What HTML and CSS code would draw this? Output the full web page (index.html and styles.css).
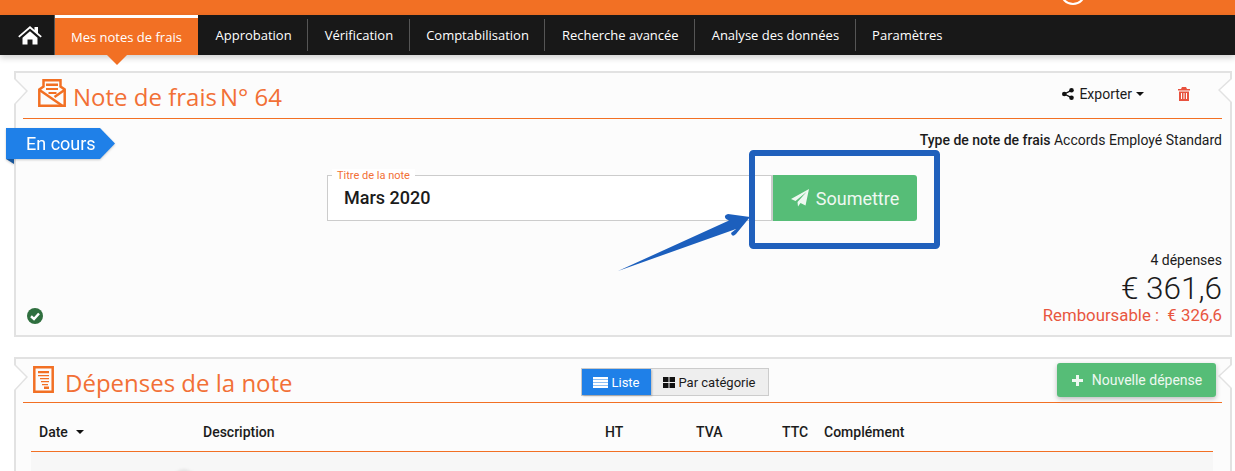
FILE: index.html
```html
<!DOCTYPE html>
<html lang="fr">
<head>
<meta charset="utf-8">
<title>Note de frais N° 64</title>
<link rel="stylesheet" href="styles.css">
</head>
<body>
<div class="topbar"><span class="avatar"></span></div>
<nav class="nav">
  <a class="nav-home">
    <svg width="24" height="20" viewBox="0 0 24 20"><path class="home-out" d="M12 1 L16.500 4.900 V2 H20 V8 L23.800 11.300 L22.600 12.600 L12 3.600 L1.400 12.600 L0.200 11.300 Z"/><path class="home-out" d="M4.500 12.800 L12 6.300 L19.500 12.800 V19.500 H14.500 V14.500 H9.500 V19.500 H4.500Z"/></svg>
  </a>
  <a class="nav-item active">Mes notes de frais</a>
  <a class="nav-item sep">Approbation</a>
  <a class="nav-item sep">Vérification</a>
  <a class="nav-item sep">Comptabilisation</a>
  <a class="nav-item sep">Recherche avancée</a>
  <a class="nav-item sep">Analyse des données</a>
  <a class="nav-item">Paramètres</a>
</nav>
<main class="main">
  <section class="card card-note">
    <svg class="notch notch-l" width="14" height="28" viewBox="0 0 14 28"><path d="M0 0 L13 13 L0 27" /></svg>
    <svg class="notch notch-r" width="14" height="28" viewBox="0 0 14 28"><path d="M14 0 L1 12 L14 25" /></svg>
    <header class="card-head">
      <div class="title">
        <svg class="title-icon" width="28" height="28" viewBox="0 0 28 28"><path class="ico-stroke" d="M1.300 10.500 L5.500 7.500 V1.300 H22.500 V7.500 L26.700 10.500 V26.700 H1.300Z"/><path class="ico-stroke" d="M1.500 11 L24 26.500 M26.500 11 L16.500 18"/><path class="ico-fill" d="M8 4.500h12v2.500H8zM8 9h12v2H8zM10.500 13h8v2h-8z"/></svg>
        <h1 class="title-text">Note de frais<span class="title-num">N° 64</span></h1>
      </div>
      <div class="actions">
        <span class="export"><svg width="12" height="12" viewBox="0 0 12 12"><circle cx="9.500" cy="2.300" r="2.300"/><circle cx="2.300" cy="6" r="2.300"/><circle cx="9.500" cy="9.700" r="2.300"/><path class="share-line" d="M9.500 2.300 L2.300 6 L9.500 9.700"/></svg>Exporter<i class="caret"></i></span>
        <svg class="trash" width="12" height="14" viewBox="0 0 12 14"><path d="M4 0h4l1 2h3v1.500H0V2h3Z"/><path fill-rule="evenodd" d="M1 4.500h10V14H1Z M3 6v6h1V6Z M5.500 6v6h1V6Z M8 6v6h1V6Z"/></svg>
      </div>
    </header>
    <div class="note-body">
      <div class="badge"><span class="badge-text">En cours</span><i class="badge-fold"></i></div>
      <p class="type"><b>Type de note de frais</b> Accords Employé Standard</p>
      <div class="submit-row">
        <div class="field">
          <span class="field-label">Titre de la note</span>
          <span class="field-value">Mars 2020</span>
        </div>
        <button class="btn-submit">
          <svg width="18" height="18" viewBox="0 0 18 18"><path d="M18 0 L14.500 16.500 L9.500 14 L7 17.500 L6.500 13 L15.500 3 L4.500 12 L0 10Z"/></svg>Soumettre
        </button>
      </div>
      <div class="note-foot">
        <svg class="ok" width="16" height="16" viewBox="0 0 16 16"><circle cx="8" cy="8" r="8"/><path d="M4 8.300 L7 11 L12 5.500"/></svg>
        <div class="totals">
          <div class="count">4 dépenses</div>
          <div class="amount">€ 361,6</div>
          <div class="refund">Remboursable :&nbsp; € 326,6</div>
        </div>
      </div>
    </div>
  </section>

  <section class="card card-exp">
    <svg class="notch notch-l" width="14" height="28" viewBox="0 0 14 28"><path d="M0 0 L13 13 L0 27" /></svg>
    <svg class="notch notch-r" width="14" height="28" viewBox="0 0 14 28"><path d="M14 0 L1 12 L14 25" /></svg>
    <header class="exp-head">
      <div class="title">
        <svg class="exp-icon" width="21" height="27" viewBox="0 0 21 27"><path class="ico-stroke" d="M1.300 1.300h18.400v24.400H1.300Z"/><path class="ico-fill" d="M5 5h11v2.200H5zM5 9h11v1.300H5zM7 12h9v1.300H7zM8 15h8v1.300H8zM9 18h6v1.300H9zM11 20.500h5v2.500h-5z"/></svg>
        <h2 class="title-text">Dépenses de la note</h2>
      </div>
      <div class="toggle">
        <span class="toggle-on"><svg width="15" height="11" viewBox="0 0 15 11"><path d="M0 0h15v2.500H0zM0 3h15v2.300H0zM0 5.800h15v2.300H0zM0 8.600h15V11H0z"/></svg>Liste</span>
        <span class="toggle-off"><svg width="12" height="11" viewBox="0 0 12 11"><path d="M0 0h5.500v5H0zM6.500 0H12v5H6.500zM0 6h5.500v5H0zM6.500 6H12v5H6.500z"/></svg>Par catégorie</span>
      </div>
      <button class="btn-new"><svg width="11" height="11" viewBox="0 0 11 11"><path d="M4 0h3v4h4v3H7v4H4V7H0V4h4Z"/></svg>Nouvelle dépense</button>
    </header>
    <div class="table-head">
      <span class="col-date">Date<i class="caret caret-date"></i></span>
      <span>Description</span>
      <span>HT</span>
      <span>TVA</span>
      <span>TTC</span>
      <span>Complément</span>
    </div>
    <div class="table-row"><i class="row-bump"></i></div>
  </section>
</main>

<svg class="annot" width="1235" height="471" viewBox="0 0 1235 471">
  <rect class="annot-box" x="752" y="153" width="185" height="93" rx="1.500"/>
  <path class="annot-arrow" d="M618 271 L729 220.500 L726 219 Q723 215 728 214 L750 217 L736 234 Q732 238 731 233 L736 229 Z"/>
</svg>
</body>
</html>
```
FILE: styles.css
```css
* { box-sizing: border-box; }
html, body { margin: 0; height: 471px; overflow: hidden; background: #fff; }
body { font-family: Roboto, "Liberation Sans", sans-serif; color: #1b1b1b; position: relative; }

.topbar { height: 15px; background: #f27024; position: relative; overflow: hidden; }
.avatar { position: absolute; left: 1060px; top: -21px; width: 26px; height: 26px; border: 2px solid #fff; border-radius: 50%; }

.nav { height: 40px; background: #181818; display: flex; align-items: stretch; box-shadow: 0 3px 6px rgba(0,0,0,.18); font-family: "Open Sans", sans-serif; font-size: 13px; color: #fff; position: relative; }
.nav-home { width: 55px; display: flex; align-items: center; justify-content: center; padding-left: 5px; border-right: 1px solid #555; }
.home-out { fill: #fff; }
.nav-item { display: flex; align-items: center; padding: 0 16.500px; white-space: nowrap; position: relative; }
.nav-item.sep::after { content: ""; position: absolute; right: 0; top: 4px; bottom: 4px; width: 1px; background: #555; }
.nav-item.active { width: 143px; margin-right: 1px; padding: 0 0 0 16px; background: #f27024; border-top: 3px solid #fff; }
.nav-item.active::after { content: ""; position: absolute; left: 52px; top: 37px; border: 10px solid transparent; border-top-color: #f27024; border-bottom-width: 0; }

.main { padding: 16px 3px 0 14px; }
.card { position: relative; background: #fcfcfc; border: 2px solid #e2e2e2; padding: 0 8px 0 7px; }
.notch { position: absolute; fill: #fff; stroke: #e2e2e2; stroke-width: 1.500; }
.notch-l { left: -2px; top: 5px; }
.notch-r { right: -2px; top: 5px; }

.card-head { height: 46px; border-bottom: 1px solid #f27024; display: flex; justify-content: space-between; }
.title { display: flex; align-items: flex-start; }
.title-icon { margin: 6px 0 0 15px; }
.ico-stroke { fill: none; stroke: #f27024; stroke-width: 2.500; }
.ico-fill { fill: #f27024; }
.title-text { margin: 6px 0 0 7px; font-family: "Open Sans", sans-serif; font-size: 24px; line-height: 36px; font-weight: 400; color: #f27036; white-space: nowrap; }
.title-num { margin-left: 3px; }
.actions { display: flex; align-items: center; gap: 34px; padding: 0 32px 3px 0; font-size: 14px; height: 44px; }
.export { display: inline-flex; align-items: center; gap: 5px; }
.export svg { fill: #111; }
.share-line { fill: none; stroke: #111; stroke-width: 1.300; }
.caret { display: inline-block; border: 4px solid transparent; border-top-color: #111; border-bottom-width: 0; margin-left: -1px; }
.trash { fill: #e8523f; }

.note-body { position: relative; height: 216px; display: flex; flex-direction: column; }
.badge { position: absolute; left: -17px; top: 9px; width: 109px; height: 31px; filter: drop-shadow(0 1px 1px rgba(0,0,0,.2)); }
.badge::before { content: ""; position: absolute; inset: 0; background: #1f80e8; clip-path: polygon(0 0, 94px 0, 109px 50%, 94px 100%, 0 100%); }
.badge-text { position: relative; display: block; color: #fff; font-size: 18px; line-height: 32px; padding-left: 20px; }
.badge-fold { position: absolute; left: 0; top: 31px; border-top: 5px solid #17569c; border-left: 8px solid transparent; }
.type { margin: 12px 0 0; font-size: 14px; line-height: 18px; text-align: right; }
.type b { font-weight: 500; }
.submit-row { display: flex; margin: 26px 0 0 304px; height: 46px; }
.field { width: 446px; border: 1px solid #ccc; border-right: 2px solid #ccc; background: #fff; position: relative; display: flex; align-items: center; padding-left: 16px; }
.field-label { position: absolute; left: 4px; top: -7px; padding: 0 5px; background: #fff; font-size: 11px; line-height: 14px; color: #f27036; }
.field-value { font-size: 18px; font-weight: 500; line-height: 20px; margin-top: -1px; }
.btn-submit { width: 144px; border: 0; border-radius: 0 3px 3px 0; background: #56bd77; color: #eef8f1; font: 18px Roboto, sans-serif; display: flex; align-items: center; justify-content: center; gap: 7px; padding: 0; }
.btn-submit svg { fill: #eef8f1; }
.note-foot { margin-top: auto; display: flex; justify-content: space-between; align-items: flex-end; padding-bottom: 11px; }
.ok { fill: #2f6f3f; margin: 0 0 0 4px; }
.ok path { fill: none; stroke: #fff; stroke-width: 2.500; }
.totals { text-align: right; }
.count { font-size: 14px; line-height: 17px; }
.amount { font-size: 31.500px; font-weight: 300; line-height: 40px; margin-bottom: -2px; }
.refund { font-size: 16.800px; line-height: 17px; color: #e8563f; }

.card-note { height: 266px; }
.card-exp { margin-top: 20px; height: 200px; }
.exp-head { height: 44px; border-bottom: 1px solid #f27024; position: relative; display: flex; }
.exp-icon { margin: 7px 0 0 10px; }
.exp-head .title-text { margin: 6px 0 0 11px; }
.toggle { position: absolute; left: 558px; top: 9px; height: 28px; width: 188px; display: flex; border: 1px solid #ccc; font-size: 13px; }
.toggle span { display: inline-flex; align-items: center; gap: 3px; }
.toggle-on { width: 69px; background: #1f80e8; color: #fff; justify-content: center; fill: #fff; box-shadow: 1px 1px 2px rgba(0,0,0,.25); position: relative; }
.toggle-off { flex: 1; background: #eee; justify-content: center; fill: #111; }
.btn-new { position: absolute; left: 1034px; top: 4px; width: 159px; height: 34px; border: 0; border-radius: 3px; background: #56bd77; color: #eef8f1; font: 14px Roboto, sans-serif; display: flex; align-items: center; justify-content: center; gap: 9px; padding: 0 0 0 1px; box-shadow: 0 2px 5px rgba(0,0,0,.25); fill: #eef8f1; }
.table-head { margin: 0 9px 0 8px; height: 49px; border-bottom: 1px solid #f27024; display: grid; grid-template-columns: 164px 402px 91px 86px 42px 1fr; align-items: center; padding: 10px 0 0 8px; font-size: 14px; font-weight: 500; }
.col-date { display: flex; align-items: center; }
.caret-date { margin-left: 8px; }
.table-row { margin: 0 9px 0 8px; height: 100px; background: #f7f7f7; position: relative; }
.row-bump { position: absolute; left: 141px; top: 17px; width: 24px; height: 24px; border-radius: 50%; background: #e6e6e6; filter: blur(1px); }

.annot { position: absolute; left: 0; top: 0; pointer-events: none; }
.annot-box { fill: none; stroke: #2060bc; stroke-width: 6; }
.annot-arrow { fill: #1c5fbd; }
```
